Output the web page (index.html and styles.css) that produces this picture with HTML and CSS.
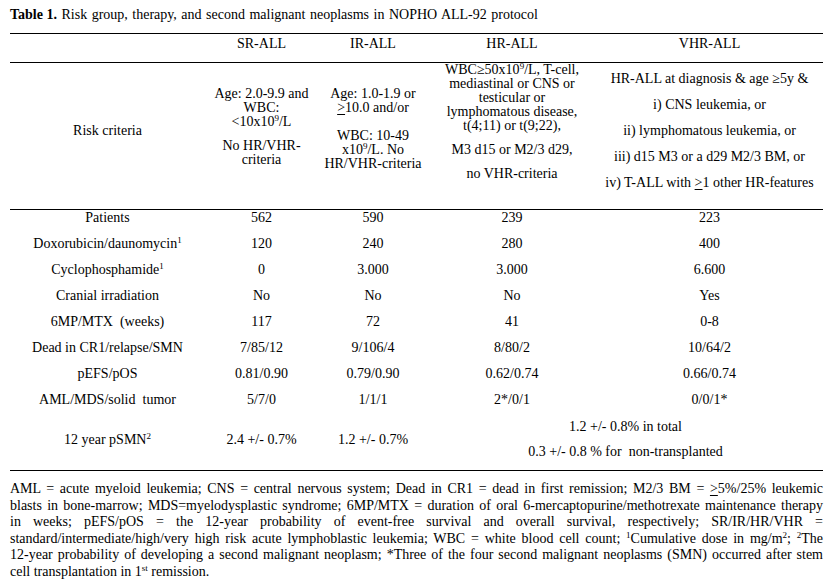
FILE: index.html
```html
<!DOCTYPE html>
<html>
<head>
<meta charset="utf-8">
<link rel="stylesheet" href="styles.css">
</head>
<body>
<div class="page">
  <div class="title"><b>Table 1.</b> Risk group, therapy, and second malignant neoplasms in NOPHO ALL-92 protocol</div>
  <table class="tbl">
    <colgroup>
      <col class="c1"><col class="c2"><col class="c3"><col class="c4"><col class="c5">
    </colgroup>
    <thead>
      <tr class="head">
        <th></th><th>SR-ALL</th><th>IR-ALL</th><th>HR-ALL</th><th>VHR-ALL</th>
      </tr>
    </thead>
    <tbody>
      <tr class="risk">
        <td class="lbl"><p>Risk criteria</p></td>
        <td class="sr"><p>Age: 2.0-9.9 and<br>WBC:<br>&lt;10x10<sup>9</sup>/L</p><p>No HR/VHR-<br>criteria</p></td>
        <td class="ir"><p>Age: 1.0-1.9 or<br><u>&gt;</u>10.0 and/or</p><p>WBC: 10-49<br>x10<sup>9</sup>/L. No<br>HR/VHR-criteria</p></td>
        <td class="hr"><p>WBC≥50x10<sup>9</sup>/L, T-cell,<br>mediastinal or CNS or<br>testicular or<br>lymphomatous disease,<br>t(4;11) or t(9;22),</p><p>M3 d15 or M2/3 d29,</p><p>no VHR-criteria</p></td>
        <td class="vhr"><p>HR-ALL at diagnosis &amp; age ≥5y &amp;</p><p>i) CNS leukemia, or</p><p>ii) lymphomatous leukemia, or</p><p>iii) d15 M3 or a d29 M2/3 BM, or</p><p>iv) T-ALL with <u>&gt;</u>1 other HR-features</p></td>
      </tr>
      <tr class="row"><td>Patients</td><td>562</td><td>590</td><td>239</td><td>223</td></tr>
      <tr class="row"><td>Doxorubicin/daunomycin<sup>1</sup></td><td>120</td><td>240</td><td>280</td><td>400</td></tr>
      <tr class="row"><td>Cyclophosphamide<sup>1</sup></td><td>0</td><td>3.000</td><td>3.000</td><td>6.600</td></tr>
      <tr class="row"><td>Cranial irradiation</td><td>No</td><td>No</td><td>No</td><td>Yes</td></tr>
      <tr class="row"><td>6MP/MTX&nbsp; (weeks)</td><td>117</td><td>72</td><td>41</td><td>0-8</td></tr>
      <tr class="row"><td>Dead in CR1/relapse/SMN</td><td>7/85/12</td><td>9/106/4</td><td>8/80/2</td><td>10/64/2</td></tr>
      <tr class="row"><td>pEFS/pOS</td><td>0.81/0.90</td><td>0.79/0.90</td><td>0.62/0.74</td><td>0.66/0.74</td></tr>
      <tr class="row"><td>AML/MDS/solid&nbsp; tumor</td><td>5/7/0</td><td>1/1/1</td><td>2*/0/1</td><td>0/0/1*</td></tr>
      <tr class="last">
        <td><p>12 year pSMN<sup>2</sup></p></td>
        <td><p>2.4 +/- 0.7%</p></td>
        <td><p>1.2 +/- 0.7%</p></td>
        <td colspan="2"><p>1.2 +/- 0.8% in total</p><p>0.3 +/- 0.8 % for&nbsp; non-transplanted</p></td>
      </tr>
    </tbody>
  </table>
  <div class="note">
    <span class="ln">AML = acute myeloid leukemia; CNS = central nervous system; Dead in CR1 = dead in first remission; M2/3 BM = <u>&gt;</u>5%/25% leukemic</span>
    <span class="ln">blasts in bone-marrow; MDS=myelodysplastic syndrome; 6MP/MTX = duration of oral 6-mercaptopurine/methotrexate maintenance therapy</span>
    <span class="ln">in weeks; pEFS/pOS = the 12-year probability of event-free survival and overall survival, respectively; SR/IR/HR/VHR =</span>
    <span class="ln">standard/intermediate/high/very high risk acute lymphoblastic leukemia; WBC = white blood cell count; <sup>1</sup>Cumulative dose in mg/m<sup>2</sup>; <sup>2</sup>The</span>
    <span class="ln">12-year probability of developing a second malignant neoplasm; *Three of the four second malignant neoplasms (SMN) occurred after stem</span>
    <span class="ln end">cell transplantation in 1<sup>st</sup> remission.</span>
  </div>
</div>
</body>
</html>
```

FILE: styles.css
```css
html, body {
  margin: 0;
  padding: 0;
  background: #ffffff;
}

body {
  font-family: "Liberation Serif", "Times New Roman", serif;
  font-size: 14px;
  color: #000000;
}

.page {
  padding: 7px 16px 0 10px;
  width: 813px;
}

.title {
  line-height: 16px;
  height: 26px;
  word-spacing: 1px;
}

.title b {
  word-spacing: 0;
}

sup {
  font-size: 9px;
  line-height: 0;
  vertical-align: 5px;
}

u {
  text-decoration: underline;
  text-underline-offset: 2px;
}

.tbl {
  width: 813px;
  border-collapse: collapse;
  table-layout: fixed;
  border-top: 1px solid #000;
  border-bottom: 1px solid #000;
}

.c1 { width: 195px; }
.c2 { width: 113px; }
.c3 { width: 110px; }
.c4 { width: 168px; }
.c5 { width: 227px; }

.tbl th,
.tbl td {
  padding: 0;
  text-align: center;
  font-weight: normal;
  white-space: nowrap;
}

.tbl p {
  margin: 0;
}

.head th {
  height: 26px;
  vertical-align: top;
  padding-top: 2px;
  line-height: 15px;
  border-bottom: 1px solid #000;
}

.risk td {
  height: 147px;
  box-sizing: border-box;
  vertical-align: top;
  line-height: 14px;
  border-bottom: 1px solid #000;
}

.risk td p {
  margin-bottom: 10px;
}

.risk td.lbl { padding-top: 61px; }
.risk td.sr { padding-top: 24px; }
.risk td.ir { padding-top: 24px; }
.risk td.ir p:first-child { margin-bottom: 14px; }
.risk td.hr { padding-top: 0; }
.risk td.hr p:last-child { margin-top: 2px; }
.risk td.vhr { padding-top: 9px; }
.risk td.vhr p { margin-bottom: 12px; }

.row td {
  height: 26px;
  vertical-align: top;
  line-height: 15px;
}

.last td {
  height: 52px;
  vertical-align: middle;
  line-height: 15px;
}

.last td p {
  margin-bottom: 10px;
}

.note {
  margin: 10px 0 0 0;
  line-height: 16.6px;
}

.note .ln {
  display: block;
  white-space: nowrap;
  text-align: justify;
  text-align-last: justify;
}

.note .ln.end {
  text-align-last: left;
}
```
